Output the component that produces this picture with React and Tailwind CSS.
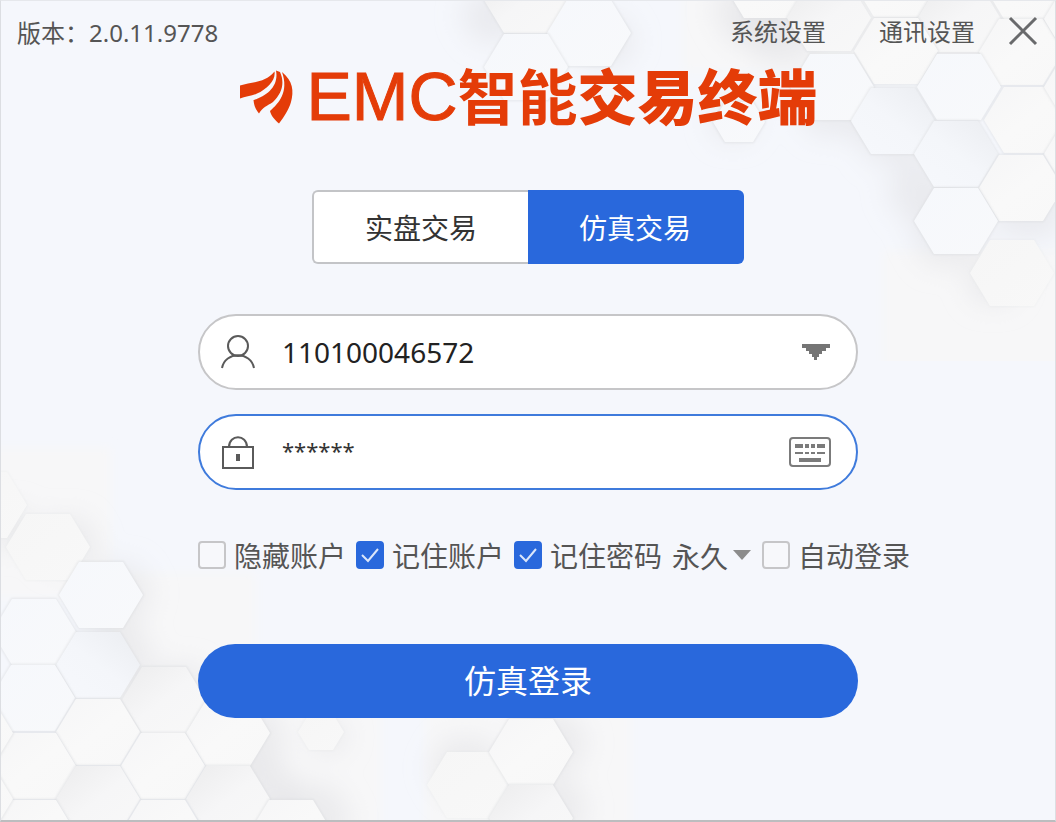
import { useState } from 'react';

const HEX_W = 42;
const HEX_H = 33;

const hexPoints = (x, y, s = 1) => {
  const w = HEX_W * s;
  const h = HEX_H * s;
  const k = w * 0.52;
  return [
    [x - w, y], [x - k, y - h], [x + k, y - h],
    [x + w, y], [x + k, y + h], [x - k, y + h],
  ].map((p) => p.map(Math.round).join(',')).join(' ');
};

// Each cell: centre x, centre y, tone, scale.
const TOP_CELLS = [
  [93, -1, 'low'], [156, 32, 'blue'], [93, 66, 'blue'],
  [333, -16, 'grey'], [396, 17, 'low'], [463, -17, 'grey'], [526, 18, 'low'], [593, -15, 'grey'],
  [463, 50, 'grey'], [588, 51, 'grey'], [399, 86, 'blue'], [460, 120, 'deep'],
  [526, 86, 'blue'], [593, 119, 'grey'], [653, 86, 'grey'], [653, 18, 'grey'], [523, 153, 'deep'],
  [653, 153, 'grey'], [588, 187, 'grey'], [523, 220, 'blue'], [579, 272, 'faint'], [306, 121, 'blue', 0.62],
];

const BOTTOM_CELLS = [
  [-16, 87, 'faint'], [47, 129, 'faint'], [100, 177, 'blue'], [33, 214, 'blue'], [97, 247, 'deep'],
  [163, 282, 'low'], [32, 280, 'blue'], [97, 314, 'grey'], [227, 315, 'grey'], [33, 348, 'grey'],
  [162, 348, 'grey'], [97, 381, 'low'], [227, 381, 'low'], [33, 415, 'grey'], [162, 415, 'grey'],
  [290, 415, 'grey'], [320, 314, 'faint', 0.55], [468, 367, 'faint'], [530, 334, 'grey'], [530, 400, 'low'],
  [-30, 315, 'grey'], [-30, 381, 'grey'],
];

function Honeycomb({ id, cells, shadows, tiles, width, height, className }) {
  return (
    <svg aria-hidden="true" className={className} width={width} height={height} viewBox={`0 0 ${width} ${height}`}>
      <defs>
        <filter id={`${id}-soft`} x="-50%" y="-50%" width="200%" height="200%">
          <feGaussianBlur stdDeviation="13" />
        </filter>
        <filter id={`${id}-edge`} x="-20%" y="-20%" width="140%" height="140%">
          <feGaussianBlur stdDeviation="1" />
        </filter>
        <filter id={`${id}-tile`} x="-20%" y="-20%" width="140%" height="140%">
          <feGaussianBlur stdDeviation="5" />
        </filter>
        <linearGradient id={`${id}-grey`} x1="0" y1="0" x2="1" y2="1">
          <stop offset="0" stopColor="#f6f6f7" />
          <stop offset="0.5" stopColor="#f9f9f9" />
          <stop offset="1" stopColor="#f8f8f8" />
        </linearGradient>
        <linearGradient id={`${id}-low`} x1="0" y1="0" x2="1" y2="1">
          <stop offset="0" stopColor="#ececed" />
          <stop offset="0.5" stopColor="#f6f6f7" />
          <stop offset="1" stopColor="#f8f8f8" />
        </linearGradient>
        <linearGradient id={`${id}-blue`} x1="0" y1="0" x2="1" y2="1">
          <stop offset="0" stopColor="#f6f8fc" />
          <stop offset="1" stopColor="#f8f9fb" />
        </linearGradient>
        <linearGradient id={`${id}-deep`} x1="0" y1="1" x2="1" y2="0">
          <stop offset="0" stopColor="#f6f8fc" />
          <stop offset="0.5" stopColor="#f4f6fa" />
          <stop offset="1" stopColor="#ebedf1" />
        </linearGradient>
        <linearGradient id={`${id}-faint`} x1="0" y1="0" x2="1" y2="1">
          <stop offset="0" stopColor="#f6f6f6" />
          <stop offset="1" stopColor="#f8f8f8" />
        </linearGradient>
      </defs>
      <g filter={`url(#${id}-tile)`}>
        {tiles.map(([x, y, w, h]) => (
          <rect key={`${x}-${y}`} x={x} y={y} width={w} height={h} fill="#f7f7f8" />
        ))}
      </g>
      <g filter={`url(#${id}-soft)`}>
        {shadows.map(([x, y, s]) => (
          <polygon key={`${x}-${y}`} points={hexPoints(x, y, s)} fill="#dfe0e3" fillOpacity="0.5" />
        ))}
      </g>
      {cells.map(([x, y, tone, s]) => (
        <g key={`${x}-${y}`}>
          <polygon points={hexPoints(x, y, s)} fill="none" stroke="#d9dadd" strokeOpacity={tone === 'faint' ? 0.2 : 0.6} strokeWidth="2" filter={`url(#${id}-edge)`} />
          <polygon points={hexPoints(x, y, s)} fill={`url(#${id}-${tone})`} />
        </g>
      ))}
    </svg>
  );
}

function Logo() {
  return (
    <svg aria-hidden="true" className="mr-3 h-14 w-14 shrink-0" viewBox="0 0 56 56" fill="#e43c08">
      <path d="M2 17.500C14 14 27 15 36.500 3.500C38 12 29 21 19 25.500C14 28 7 28 2 30.500Z" />
      <path d="M38 2.500L42 4C47 15 44 25 35 34C29 38 25 39 21 45.500C18 42 16 38 15.500 32C29 28 41 18 38 2.500Z" />
      <path d="M44 4C55 13 56 23 53 34C51 41 46 49 41 55.500C37 52 33 48 32 43C41 35 51 24 44 4Z" />
    </svg>
  );
}

function Tick({ label, checked, onChange }) {
  return (
    <label className="flex shrink-0 cursor-pointer items-center gap-2">
      <span className="grid size-7 place-items-center">
        <input
          type="checkbox"
          checked={checked}
          onChange={onChange}
          className="col-start-1 row-start-1 size-7 appearance-none rounded-sm border-2 border-[#c6c6c8] bg-[#f7f8fb] checked:border-[#2968dc] checked:bg-[#2968dc]"
        />
        {checked && (
          <svg aria-hidden="true" className="pointer-events-none z-10 col-start-1 row-start-1 size-7" viewBox="0 0 28 28" fill="none" stroke="#dbe6fa" strokeWidth="2">
            <path d="M6 14L12 20L22 8" />
          </svg>
        )}
      </span>
      <span className="pt-0.5">{label}</span>
    </label>
  );
}

export default function App() {
  const [mode, setMode] = useState('sim');
  const [account, setAccount] = useState('110100046572');
  const [password, setPassword] = useState('******');
  const [ticks, setTicks] = useState({ hide: false, account: true, password: true, auto: false });
  const flip = (key) => () => setTicks({ ...ticks, [key]: !ticks[key] });
  const tab = (key) =>
    mode === key
      ? 'flex-1 bg-[#2968dc] text-white border-[#2968dc]'
      : 'flex-1 bg-white text-[#333333] border-[#c3c4c7]';

  return (
    <div className="relative flex min-h-screen flex-col overflow-hidden border-x border-t border-b-2 border-x-[#dcdee2] border-t-[#e6e8ec] border-b-[#bcbdbf] bg-[#f5f7fc] font-['Noto_Sans','Noto_Sans_CJK_SC',sans-serif] text-[#555555]">
      <Honeycomb
        id="top"
        className="pointer-events-none absolute top-0 right-0"
        width={622}
        height={360}
        cells={TOP_CELLS}
        tiles={[[250, -20, 380, 90], [450, 250, 190, 130]]}
        shadows={[[60, 15, 0.8], [170, 40, 0.8], [320, 10, 1], [350, 30, 1], [300, 120, 0.6], [400, 105, 0.9], [460, 130, 1], [490, 190, 0.9], [515, 235, 0.9], [595, 205, 1], [560, 280, 0.7]]}
      />
      <Honeycomb
        id="bottom"
        className="pointer-events-none absolute bottom-0 left-0"
        width={640}
        height={402}
        cells={BOTTOM_CELLS}
        tiles={[[-20, 30, 130, 150], [110, 155, 145, 160], [230, 290, 150, 130], [425, 290, 205, 130]]}
        shadows={[[10, 110, 0.6], [65, 125, 0.8], [115, 175, 0.9], [115, 235, 0.9], [175, 280, 1], [245, 320, 1], [260, 375, 1], [327, 318, 0.5], [310, 400, 1], [465, 350, 0.9], [550, 325, 0.9], [550, 390, 0.9]]}
      />

      <header className="z-10 flex h-[60px] items-center px-4 pt-0.5 text-2xl">
        <span className="pt-0.5">版本：2.0.11.9778</span>
        <nav className="ml-auto flex items-center gap-[53px]">
          <button type="button">系统设置</button>
          <button type="button">通讯设置</button>
        </nav>
        <button type="button" aria-label="关闭" className="ml-7">
          <svg aria-hidden="true" className="size-9" viewBox="0 0 36 36" fill="none" stroke="#696a6c" strokeWidth="3">
            <path d="M7 4L33 30M33 4L7 30" />
          </svg>
        </button>
      </header>

      <h1 className="z-10 flex h-[70px] items-center justify-center text-[60px] leading-[64px] font-bold whitespace-nowrap text-[#e43c08]">
        <Logo />
        <span className="font-['Liberation_Sans',sans-serif] text-[68px] font-normal [-webkit-text-stroke:1px_#e43c08]">EMC</span>
        <span className="pb-1 font-['Noto_Sans_CJK_SC',sans-serif]">智能</span>
        <span className="pb-1 font-['Noto_Sans_CJK_SC',sans-serif] font-black">交易终端</span>
      </h1>

      <form className="z-10 mx-auto mt-[59px] flex w-full max-w-[660px] flex-col" onSubmit={(e) => e.preventDefault()}>
        <div className="mx-auto flex h-[74px] w-full max-w-[432px] text-[28px]">
          <button type="button" aria-pressed={mode === 'real'} onClick={() => setMode('real')} className={`${tab('real')} rounded-l-md border-2 border-r-0 pt-0.5`}>
            实盘交易
          </button>
          <button type="button" aria-pressed={mode === 'sim'} onClick={() => setMode('sim')} className={`${tab('sim')} rounded-r-md border-2 border-l-0 pt-0.5`}>
            仿真交易
          </button>
        </div>

        <div className="mt-[50px] flex h-[76px] items-center rounded-full border-2 border-[#c6c6c8] bg-white pr-6 pl-5">
          <label htmlFor="account" aria-label="账户">
            <svg aria-hidden="true" className="size-9" viewBox="0 0 36 36" fill="none" stroke="#5a5a5a" strokeWidth="2">
              <circle cx="18" cy="12" r="10" />
              <path d="M2 34C5 17 31 17 34 34" />
            </svg>
          </label>
          <input id="account" value={account} onChange={(e) => setAccount(e.target.value)} className="ml-[26px] min-w-0 flex-1 bg-transparent text-[28px] text-[#222222] outline-none" />
          <button type="button" aria-label="选择账户">
            <svg aria-hidden="true" className="h-4 w-8" viewBox="0 0 32 16" fill="#757575">
              <path d="M2 0H30V4H26V7H22V10H19V13H17V16H14V13H12V10H9V7H6V4H2Z" />
            </svg>
          </button>
        </div>

        <div className="mt-6 flex h-[76px] items-center rounded-full border-2 border-[#3f7bdc] bg-white pr-6 pl-5">
          <label htmlFor="password" aria-label="密码">
            <svg aria-hidden="true" className="size-9" viewBox="0 0 36 36" fill="none" stroke="#5a5a5a" strokeWidth="2">
              <rect x="3" y="13" width="30" height="21" />
              <path d="M9 13C9 0 27 0 27 13" />
              <path d="M18 20V27" strokeWidth="4" />
            </svg>
          </label>
          <input id="password" value={password} onChange={(e) => setPassword(e.target.value)} className="ml-[26px] min-w-0 flex-1 bg-transparent pb-1 text-[22px] text-[#333333] outline-none" />
          <button type="button" aria-label="软键盘">
            <svg aria-hidden="true" className="h-8 w-11" viewBox="0 0 44 32" fill="none" stroke="#7b7b7b">
              <rect x="2" y="2" width="40" height="28" rx="3" strokeWidth="2" />
              <path d="M7 10H15M17 10H21M23 10H27M29 10H37" strokeWidth="4" />
              <path d="M7 17H15M17 17H21M23 17H27M29 17H37" strokeWidth="2" />
              <path d="M11 24H33" strokeWidth="4" />
            </svg>
          </button>
        </div>

        <div className="mt-11 flex w-max items-center gap-[10px] text-[28px] leading-10">
          <Tick label="隐藏账户" checked={ticks.hide} onChange={flip('hide')} />
          <Tick label="记住账户" checked={ticks.account} onChange={flip('account')} />
          <Tick label="记住密码" checked={ticks.password} onChange={flip('password')} />
          <div className="grid items-center">
            <select aria-label="密码保存期限" defaultValue="永久" className="col-start-1 row-start-1 h-10 w-20 appearance-none bg-transparent pt-0.5 outline-none">
              <option>永久</option>
            </select>
            <svg aria-hidden="true" className="pointer-events-none col-start-1 row-start-1 h-3 w-5 justify-self-end" viewBox="0 0 20 12" fill="#8c8c8c">
              <path d="M1 1H19L10 11Z" />
            </svg>
          </div>
          <Tick label="自动登录" checked={ticks.auto} onChange={flip('auto')} />
        </div>

        <button type="submit" className="mt-[68px] h-[74px] rounded-full bg-[#2968dc] text-[32px] text-white">
          仿真登录
        </button>
      </form>
    </div>
  );
}
